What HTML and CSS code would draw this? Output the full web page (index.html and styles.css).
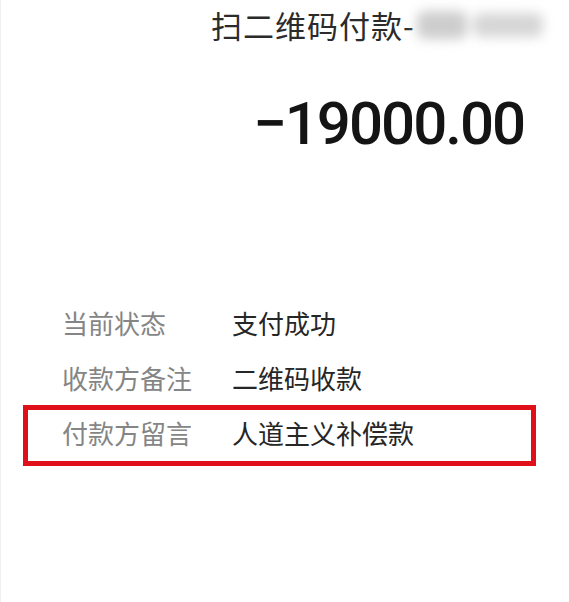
FILE: index.html
```html
<!DOCTYPE html>
<html lang="zh-CN">
<head>
<meta charset="utf-8">
<title>账单详情</title>
<link rel="stylesheet" href="styles.css">
</head>
<body>
<div class="page">
  <div class="title">扫二维码付款-<span class="masked"><span class="mask-a"></span><span class="mask-b"></span></span></div>
  <div class="amount">−19000.00</div>
  <div class="details">
    <div class="row"><span class="label">当前状态</span><span class="value">支付成功</span></div>
    <div class="row"><span class="label">收款方备注</span><span class="value">二维码收款</span></div>
    <div class="row row-marked"><span class="label">付款方留言</span><span class="value">人道主义补偿款</span></div>
  </div>
</div>
</body>
</html>
```

FILE: styles.css
```css
html, body {
  margin: 0;
  padding: 0;
  background: #ffffff;
}

.page {
  width: 569px;
  height: 602px;
  overflow: hidden;
  font-family: "Noto Sans CJK SC", "Noto Sans", sans-serif;
  border-left: 1px solid #f0f0f0;
  box-sizing: border-box;
}

.title {
  height: 50px;
  line-height: 50px;
  padding-left: 210px;
  font-size: 31px;
  letter-spacing: 1px;
  color: #2b2b2b;
  white-space: nowrap;
  display: flex;
  align-items: center;
}

.masked {
  display: inline-flex;
  align-items: center;
  gap: 6px;
  margin-left: 2px;
  height: 34px;
  filter: blur(6px);
}

.mask-a {
  width: 50px;
  height: 28px;
  background: #cdcdcd;
  border-radius: 8px;
}

.mask-b {
  width: 70px;
  height: 24px;
  background: #d6d6d6;
  border-radius: 8px;
}

.amount {
  margin-top: 34px;
  padding-left: 252px;
  height: 80px;
  line-height: 80px;
  font-family: Roboto, "Noto Sans", sans-serif;
  font-weight: 500;
  font-size: 60px;
  letter-spacing: -2px;
  color: #141414;
}

.details {
  margin-top: 131px;
  margin-left: 22px;
  width: 513px;
}

.row {
  box-sizing: border-box;
  height: 55px;
  border: 5px solid transparent;
  padding-left: 34px;
  display: flex;
  align-items: center;
  font-size: 26px;
  white-space: nowrap;
}

.row-marked {
  height: 61px;
  padding-bottom: 6px;
  border-color: #e0101a;
}

.label {
  width: 170px;
  color: #858585;
}

.value {
  color: #262626;
}
```
